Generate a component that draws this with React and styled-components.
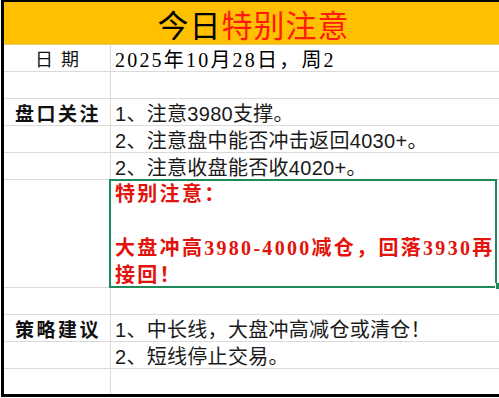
import styled, { createGlobalStyle } from "styled-components";

const GlobalStyle = createGlobalStyle`
  html, body {
    margin: 0;
    padding: 0;
    background: #ffffff;
  }
  body {
    font-family: "Liberation Serif", "Noto Sans CJK SC", serif;
    color: #111111;
  }
`;

const GRID = "#dadada";
const CJK = `"Noto Sans CJK SC", sans-serif`;

export default function App() {
  return (
    <>
      <GlobalStyle />
      <Sheet>
        <Title>
          今日<Red>特别注意</Red>
        </Title>

        <Label $spaced>日期</Label>
        <DateCell>2025年10月28日，周2</DateCell>

        <Label />
        <Text />

        <Label $bold>盘口关注</Label>
        <Text>1、注意3980支撑。</Text>
        <Label />
        <Text>2、注意盘中能否冲击返回4030+。</Text>
        <Label />
        <Text>2、注意收盘能否收4020+。</Text>

        <Label $span={4} />
        <Note>
          <NoteLine>特别注意：</NoteLine>
          <NoteLine />
          <NoteLine>大盘冲高3980-4000减仓，回落3930再</NoteLine>
          <NoteLine>接回！</NoteLine>
        </Note>

        <Label />
        <Text />

        <Label $bold>策略建议</Label>
        <Text>1、中长线，大盘冲高减仓或清仓！</Text>
        <Label />
        <Text>2、短线停止交易。</Text>
        <Label $last />
        <Text $last />
      </Sheet>
    </>
  );
}

const Sheet = styled.div`
  display: grid;
  grid-template-columns: 107px 1fr;
  grid-template-rows: 43px repeat(12, 27px) 25px;
  box-sizing: border-box;
  width: 498px;
  margin-left: 1px;
  border-top: 2px solid #000;
  border-left: 3px solid #000;
  border-bottom: 3px solid #000;
`;

const Title = styled.div`
  grid-column: 1 / -1;
  display: flex;
  align-items: center;
  justify-content: center;
  box-sizing: border-box;
  background: #ffc000;
  border-bottom: 1px solid #e9c877;
  font-family: ${CJK};
  font-size: 31px;
  letter-spacing: 1px;
  color: #000;
  padding-left: 4px;
`;

const Red = styled.span`
  color: #ff1a0f;
`;

const Label = styled.div`
  grid-row: ${(p) => (p.$span ? `span ${p.$span}` : "auto")};
  display: flex;
  align-items: center;
  justify-content: center;
  box-sizing: border-box;
  border-right: 1px solid ${GRID};
  border-bottom: ${(p) => (p.$last ? "none" : `1px solid ${GRID}`)};
  font-family: ${CJK};
  font-size: ${(p) => (p.$bold ? "19px" : "18px")};
  font-weight: ${(p) => (p.$bold ? 700 : 400)};
  letter-spacing: ${(p) => (p.$spaced ? "8px" : "2.5px")};
  padding-left: ${(p) => (p.$spaced ? "8px" : "2px")};
  color: #111;
`;

const Text = styled.div`
  display: flex;
  align-items: center;
  box-sizing: border-box;
  padding-left: 4px;
  border-bottom: ${(p) => (p.$last ? "none" : `1px solid ${GRID}`)};
  font-family: "Liberation Sans", "Noto Sans CJK SC", sans-serif;
  font-size: 20px;
  letter-spacing: 0.3px;
  white-space: nowrap;
  color: #1a1a1a;
`;

const DateCell = styled(Text)`
  font-family: "Liberation Serif", "Noto Sans CJK SC", serif;
  font-weight: 400;
  letter-spacing: 2.2px;
  color: #000;
`;

const Note = styled.div`
  grid-row: span 4;
  position: relative;
  box-sizing: border-box;
  margin: -1px 2px 0 -2px;
  padding-left: 4px;
  border: 2px solid #1e8a5c;
  color: #e3120b;
  font-family: "Liberation Serif", "Noto Sans CJK SC", serif;
  font-size: 20px;
  font-weight: 700;
  letter-spacing: 2.3px;

  &::after {
    content: "";
    position: absolute;
    right: -4px;
    bottom: -3px;
    width: 3px;
    height: 6px;
    background: #1e8a5c;
    border-left: 1px solid #fff;
  }
`;

const NoteLine = styled.div`
  height: 27px;
  line-height: 27px;
  white-space: nowrap;
`;
